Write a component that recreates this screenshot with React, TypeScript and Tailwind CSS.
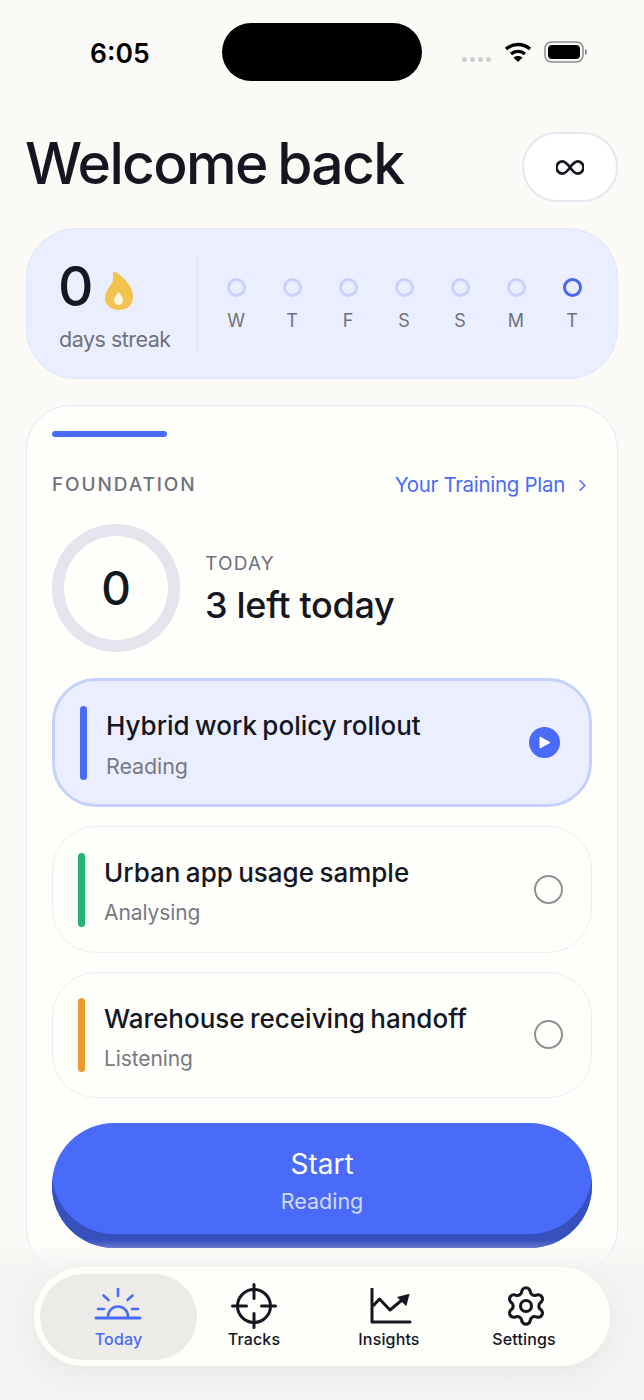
import { ChevronRight, Settings } from 'lucide-react';

const days = ['W', 'T', 'F', 'S', 'S', 'M', 'T'];

const tasks = [
  { title: 'Urban app usage sample', sub: 'Analysing', bar: 'bg-[#22b573]' },
  { title: 'Warehouse receiving handoff', sub: 'Listening', bar: 'bg-[#ec9a29]' },
];

const SunIcon = () => (
  <svg className="-ml-[2px]" width="48" height="34" viewBox="0 0 48 34" fill="none" stroke="#4a6bfa" strokeWidth="2.6" strokeLinecap="round">
    <path d="M2 31h44" strokeWidth="3" />
    <path d="M14 29.5a10 10 0 0 1 20 0" />
    <path d="M24 2v7M9.5 8.5l5 4.5M38.5 8.5l-5 4.5M4 22h6M38 22h6" />
  </svg>
);

const TargetIcon = () => (
  <svg width="46" height="46" viewBox="0 0 46 46" fill="none" stroke="#14171f" strokeWidth="3" strokeLinecap="round">
    <circle cx="23" cy="23" r="16.5" />
    <path d="M23 1.5v14M23 30.5v14M1.5 23h14M30.5 23h14" />
  </svg>
);

const ChartIcon = () => (
  <svg width="42" height="36" viewBox="0 0 42 36" fill="none" stroke="#14171f" strokeWidth="3" strokeLinejoin="round">
    <path d="M2 1v33h38" strokeLinecap="round" />
    <path d="M3 18l6.500-7L20 22l12-10" />
    <path d="M39.600 5.700L27 9l9.300 9.300z" fill="#14171f" stroke="none" />
  </svg>
);

const InfinityGlyph = () => (
  <svg width="28" height="15" viewBox="0 0 30 16" fill="none" stroke="#14171f" strokeWidth="2.900">
    <path d="M15 8c-3-4-5-6.500-8-6.500a6.500 6.500 0 0 0 0 13c3 0 5-2.500 8-6.500s5-6.500 8-6.500a6.500 6.500 0 0 1 0 13c-3 0-5-2.500-8-6.500z" />
  </svg>
);

const Flame = () => (
  <svg width="30" height="40" viewBox="0 0 30 40">
    <path d="M10 1c2 0 4 1 7 4 6 5 12 12 12 21 0 8-6 13-14 13S1 34 1 27c0-6 4-10 7-15 2-4 1-8 1-10 0-.6.4-1 1-1z" fill="#f2c34f" />
    <path d="M14.500 21c2 3 4.500 5 4.500 8.500a4.500 4.500 0 0 1-9 0c0-3.500 2.500-5.500 4.500-8.500z" fill="#fdf6e3" />
  </svg>
);

const StatusBar = () => (
  <div className="grid grid-cols-[222px_200px_222px] h-[81px] pt-[23px]">
    <div className="pl-[90px] pt-[14px] text-[26.500px] leading-[32px] font-semibold text-black">6:05</div>
    <div className="h-[58px] rounded-[29px] bg-black" />
    <div className="flex items-start pl-[40px] pt-[6px]">
      <div className="flex gap-[3px] mt-[28px]">
        <span className="w-[5px] h-[5px] rounded-full bg-[#cfcfcf]" />
        <span className="w-[5px] h-[5px] rounded-full bg-[#cfcfcf]" />
        <span className="w-[5px] h-[5px] rounded-full bg-[#cfcfcf]" />
        <span className="w-[5px] h-[5px] rounded-full bg-[#cfcfcf]" />
      </div>
      <svg className="ml-[13px] mt-[12px]" width="28" height="22" viewBox="0 0 28 22" fill="none" stroke="#000" strokeWidth="3.400">
        <path d="M2 8c7-6 17-6 24 0" />
        <path d="M7 13c4-3.500 10-3.500 14 0" />
        <path d="M14 21l-4.500-4.500c2.500-2 6.500-2 9 0z" fill="#000" stroke="none" />
      </svg>
      <svg className="ml-[12px] mt-[12px]" width="44" height="22" viewBox="0 0 44 22">
        <rect x="1" y="1" width="38" height="20" rx="6.500" fill="none" stroke="#8d8d8d" strokeWidth="1.500" />
        <rect x="4" y="4" width="32" height="14" rx="4" fill="#000" />
        <path d="M41 8c1.500.5 2 1.500 2 3s-.5 2.500-2 3z" fill="#8d8d8d" />
      </svg>
    </div>
  </div>
);

const StreakCard = () => (
  <div className="mx-[26px] mt-[26px] h-[151px] rounded-[50px] bg-[#ebeefe] border border-[#dfe4fb] flex items-center">
    <div className="w-[170px] h-[98px] pl-[32px] shrink-0">
      <div className="flex items-center h-[60px] mt-[2px] -ml-[1px]">
        <span className="text-[55px] leading-none font-medium text-[#14171f]">0</span>
        <span className="ml-[10px] mt-[8px]"><Flame /></span>
      </div>
      <div className="text-[21.500px] leading-[28px] mt-[8px] text-[#6f727c] tracking-[-0.5px]">days streak</div>
    </div>
    <div className="w-px h-[98px] bg-[#dde2f8]" />
    <div className="flex pl-[10px] mt-[3px]">
      {days.map((d, i) => (
        <div key={i} className="w-[56px] flex flex-col items-center">
          <span className={i === 6 ? 'w-[19px] h-[19px] rounded-full border-[3px] border-[#4a68e8]' : 'w-[19px] h-[19px] rounded-full border-[3px] border-[#c9d2fb]'} />
          <span className="mt-[12px] text-[18px] leading-[24px] text-[#6f727c]">{d}</span>
        </div>
      ))}
    </div>
  </div>
);

const ActiveTask = () => (
  <div className="h-[129px] rounded-[44px] bg-[#ebeefe] border-[3px] border-[#c6d1fb] flex items-center pl-[25px] pr-[29px]">
    <span className="w-[7px] h-[74px] rounded-full bg-[#4a6bfa]" />
    <div className="ml-[19px] mt-[5px] flex-1">
      <div className="text-[26px] leading-[32px] font-medium [word-spacing:-1.500px] text-[#14171f]">Hybrid work policy rollout</div>
      <div className="mt-[10px] text-[21.500px] leading-[28px] text-[#777a83] tracking-[-0.1px]">Reading</div>
    </div>
    <span className="w-[31px] h-[31px] rounded-full bg-[#4a6bfa] flex items-center justify-center">
      <svg width="12" height="13" viewBox="0 0 12 13"><path d="M1 1l10 5.500L1 12z" fill="#fff" stroke="#fff" strokeLinejoin="round" /></svg>
    </span>
  </div>
);

const TaskRow = ({ title, sub, bar }: { title: string; sub: string; bar: string }) => (
  <div className="h-[126.500px] rounded-[44px] border border-[#eceef6] flex items-center pl-[25px] pr-[28px]">
    <span className={`w-[7px] h-[74px] mt-[1px] rounded-full ${bar}`} />
    <div className="ml-[19px] mt-[6px] flex-1">
      <div className="text-[26px] leading-[32px] font-medium [word-spacing:-1.500px] text-[#14171f]">{title}</div>
      <div className="mt-[10px] text-[21px] leading-[28px] text-[#777a83] tracking-[-0.1px]">{sub}</div>
    </div>
    <span className="w-[29px] h-[29px] rounded-full border-[2px] border-[#8f9094]" />
  </div>
);

const MainCard = () => (
  <div className="mx-[26px] mt-[26px] h-[868px] rounded-[44px] bg-[#fefefb] border border-[#e3e7fb] px-[25px] pt-[25px]">
    <div className="w-[115px] h-[6px] rounded-full bg-[#4a6bfa]" />
    <div className="mt-[34px] flex items-center justify-between h-[28px]">
      <span className="text-[19px] font-medium tracking-[1.900px] text-[#6f727c]">FOUNDATION</span>
      <span className="flex items-center text-[20.500px] tracking-[-0.3px] text-[#4a6bfa]">
        Your Training Plan
        <ChevronRight className="ml-[8px]" size={19} strokeWidth={2} />
      </span>
    </div>
    <div className="mt-[25px] flex items-center">
      <div className="w-[128px] h-[128px] rounded-full border-[12px] border-[#e4e5ec] flex items-center justify-center text-[46px] font-medium text-[#14171f]">0</div>
      <div className="ml-[25px] mt-[2px]">
        <div className="text-[19px] leading-[26px] tracking-[1.200px] text-[#6f727c]">TODAY</div>
        <div className="mt-[6px] text-[36px] leading-[44px] font-medium tracking-[-0.3px] text-[#14171f]">3 left today</div>
      </div>
    </div>
    <div className="mt-[26px] flex flex-col">
      <ActiveTask />
      <div className="mt-[19px] flex flex-col gap-[19px]">
        {tasks.map((t) => (
          <TaskRow key={t.title} {...t} />
        ))}
      </div>
    </div>
    <div className="mt-[25px] h-[125px] rounded-[62px] bg-[#4a6bfa] shadow-[inset_0_-14px_0_#3650bd] flex flex-col items-center pt-[23px] text-white">
      <span className="text-[28px] leading-[36px]">Start</span>
      <span className="mt-[5px] text-[21.500px] leading-[28px] text-white/75">Reading</span>
    </div>
  </div>
);

const TabBar = () => (
  <div className="absolute left-[34px] top-[1267px] w-[576px] h-[99px] rounded-[50px] bg-[#fefefb] shadow-[0_8px_24px_rgba(0,0,0,0.05)] flex items-center pl-[6px]">
    <div className="w-[157px] h-[86px] rounded-[43px] bg-[#ecebe8] flex flex-col items-center justify-end pb-[11px]">
      <SunIcon />
      <span className="mt-[8px] text-[16px] leading-[20px] font-medium tracking-[0.15px] text-[#4a6bfa]">Today</span>
    </div>
    <div className="w-[114px] flex flex-col items-center pb-[1px]">
      <TargetIcon />
      <span className="text-[16px] leading-[20px] font-medium tracking-[0.15px] text-[#14171f]">Tracks</span>
    </div>
    <div className="w-[156px] flex flex-col items-center pb-[1px]">
      <div className="h-[46px] flex items-center pl-[3px]"><ChartIcon /></div>
      <span className="text-[16px] leading-[20px] font-medium tracking-[0.15px] text-[#14171f]">Insights</span>
    </div>
    <div className="w-[114px] flex flex-col items-center pb-[1px]">
      <div className="h-[46px] flex items-center pl-[3px]">
        <Settings size={44} strokeWidth={1.700} className="text-[#14171f]" />
      </div>
      <span className="text-[16px] leading-[20px] font-medium tracking-[0.15px] text-[#14171f]">Settings</span>
    </div>
  </div>
);

export default function App() {
  return (
    <div className="relative w-[644px] h-[1400px] overflow-hidden bg-[#fbfaf7] font-['Inter',sans-serif]">
      <StatusBar />
      <div className="mt-[51px] mx-[26px] flex items-center justify-between h-[70px]">
        <h1 className="-ml-[1px] pb-[7px] text-[57px] leading-none font-[550] tracking-[-1.700px] [word-spacing:-3px] text-[#14171f]">Welcome back</h1>
        <div className="w-[96px] h-[70px] rounded-[35px] bg-white border-2 border-[#e7e7ee] flex items-center justify-center">
          <InfinityGlyph />
        </div>
      </div>
      <StreakCard />
      <MainCard />
      <div className="absolute inset-x-0 top-[1240px] bottom-0 bg-gradient-to-b from-[#f4f3f1]/0 to-[#f4f3f1] to-[20%]" />
      <TabBar />
    </div>
  );
}
